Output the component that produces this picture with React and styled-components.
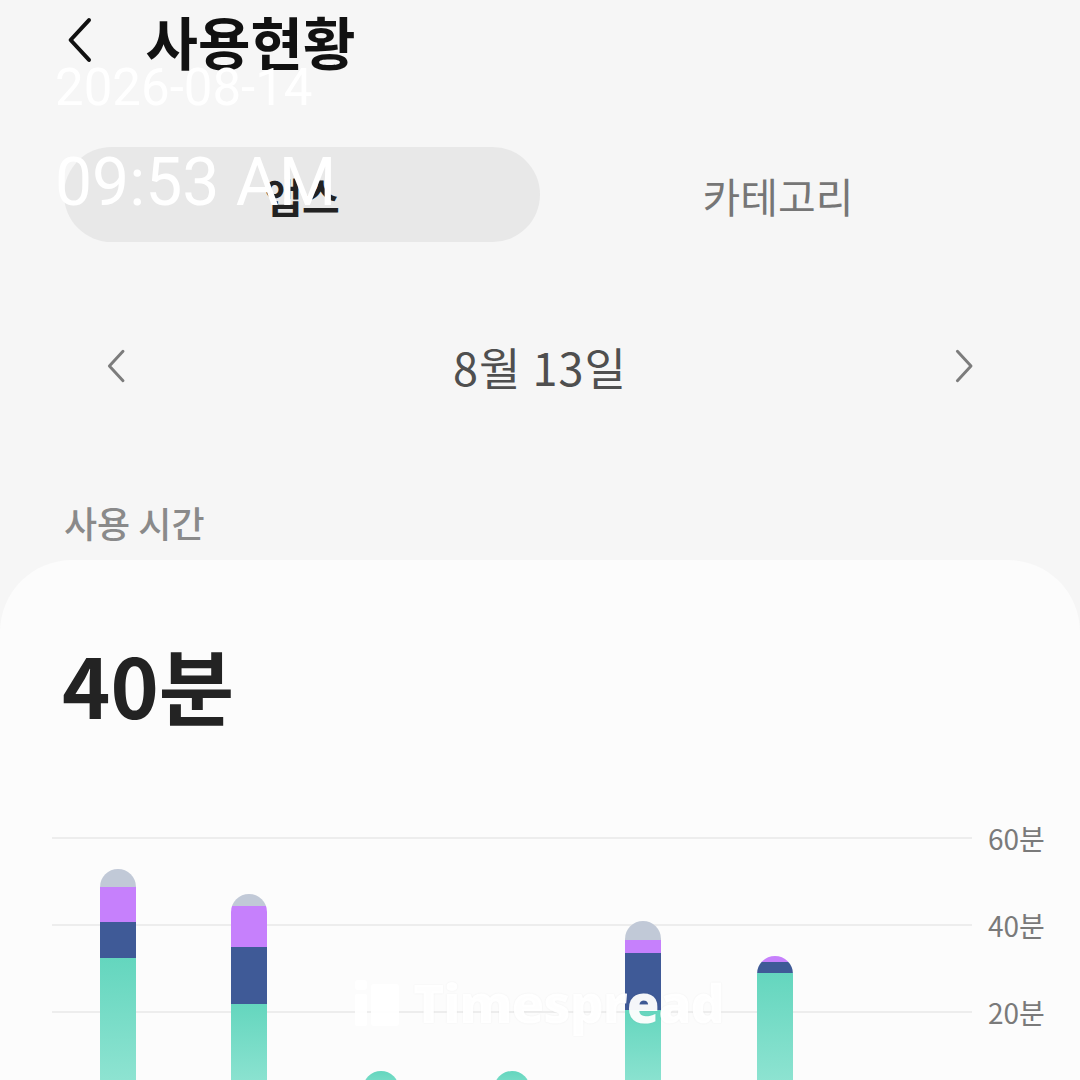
import React from "react";
import styled, { createGlobalStyle } from "styled-components";

const GlobalStyle = createGlobalStyle`
  html, body {
    margin: 0;
    padding: 0;
    background: #f6f6f6;
  }
  body {
    font-family: "Noto Sans CJK KR", "Noto Sans", sans-serif;
    overflow: hidden;
  }
`;

const PX_PER_MIN = 87 / 20;

const COLORS = {
  other: "#c1c9d7",
  purple: "#c680fc",
  navy: "#3f5a97",
  teal: "linear-gradient(180deg, #64d6be 0%, #94e5d4 100%)",
};

const bars = [
  [
    ["other", 4.1],
    ["purple", 8.1],
    ["navy", 8.3],
    ["teal", 32.4],
  ],
  [
    ["other", 2.8],
    ["purple", 9.4],
    ["navy", 13.1],
    ["teal", 21.8],
  ],
  [["teal", 6.4]],
  [["teal", 6.4]],
  [
    ["other", 4.4],
    ["purple", 3],
    ["navy", 13.1],
    ["teal", 20.4],
  ],
  [
    ["purple", 1.4],
    ["navy", 2.5],
    ["teal", 29],
  ],
  [],
];

const ticks = ["60분", "40분", "20분", ""];

const Page = styled.div`
  position: relative;
  width: 1080px;
  height: 1080px;
  overflow: hidden;
  background: #f6f6f6;
  display: flex;
  flex-direction: column;

  & > * {
    flex-shrink: 0;
  }
`;

const Header = styled.div`
  height: 80px;
  display: flex;
  align-items: center;
  padding-left: 66px;
  gap: 52px;
`;

const Title = styled.h1`
  margin: 0;
  font-size: 57px;
  font-weight: 700;
  color: #111;
  line-height: 1;
`;

const Segmented = styled.div`
  margin: 67px 64px 0;
  height: 95px;
  display: flex;
`;

const Segment = styled.div`
  flex: 1;
  display: flex;
  align-items: center;
  justify-content: center;
  border-radius: 48px;
  font-size: 41px;
  background: ${(p) => (p.$active ? "#e8e8e8" : "transparent")};
  color: ${(p) => (p.$active ? "#222" : "#767676")};
  font-weight: ${(p) => (p.$active ? 700 : 400)};
`;

const DateNav = styled.div`
  margin-top: 84px;
  height: 80px;
  padding: 0 106px 0 106px;
  display: flex;
  align-items: center;
  justify-content: space-between;
`;

const DateText = styled.div`
  font-size: 45px;
  color: #4f4f4f;
  font-weight: 400;
  letter-spacing: 1px;
`;

const SectionLabel = styled.div`
  margin: 94px 0 0 64px;
  height: 44px;
  line-height: 44px;
  font-size: 36px;
  font-weight: 500;
  color: #8a8a8a;
`;

const Card = styled.div`
  margin-top: 16px;
  flex: 1 0 auto;
  background: #fcfcfc;
  border-radius: 72px 72px 0 0;
  display: flex;
  flex-direction: column;
`;

const Total = styled.div`
  padding: 79px 0 0 62px;
  height: 90px;
  line-height: 90px;
  font-size: 82px;
  font-weight: 700;
  color: #232323;
`;

const Chart = styled.div`
  margin-top: 108px;
  padding-left: 52px;
  position: relative;
`;

const GridRow = styled.div`
  height: 87px;
  display: flex;
  align-items: flex-start;
`;

const GridLine = styled.div`
  width: 920px;
  border-top: 2px solid #ededed;
`;

const TickLabel = styled.div`
  margin-left: 16px;
  font-size: 28px;
  color: #7a7a7a;
  line-height: 34px;
  transform: translateY(-16px);
`;

const BarsLayer = styled.div`
  position: absolute;
  left: 52px;
  top: 1px;
  width: 920px;
  height: 261px;
  display: grid;
  grid-template-columns: repeat(7, 1fr);
  align-items: end;
  justify-items: center;
`;

const Bar = styled.div`
  width: 36px;
  display: flex;
  flex-direction: column;
  border-radius: 18px 18px 0 0;
  overflow: hidden;
`;

const Piece = styled.div`
  background: ${(p) => COLORS[p.$kind]};
`;

const Stamp = styled.div`
  position: absolute;
  left: 55px;
  top: 58px;
  font-family: Roboto, "Liberation Sans", sans-serif;
  color: #fff;
  display: flex;
  flex-direction: column;
  pointer-events: none;
`;

const StampDate = styled.div`
  font-size: 51px;
  line-height: 60px;
`;

const StampTime = styled.div`
  margin-top: 30px;
  font-size: 66px;
  line-height: 70px;
`;

const Watermark = styled.div`
  position: absolute;
  left: 355px;
  top: 977px;
  display: flex;
  align-items: center;
  gap: 14px;
  color: rgba(255, 255, 255, 0.95);
  pointer-events: none;
`;

const WatermarkText = styled.div`
  font-family: "Open Sans", Lato, sans-serif;
  font-weight: 800;
  font-size: 53px;
  line-height: 52px;
  letter-spacing: -1px;
  text-shadow: 0 0 2px rgba(0, 0, 0, 0.06);
`;

const Chevron = ({ dir = "left", size = 40, color = "#111", width = 3 }) => (
  <svg width={size * 0.6} height={size} viewBox="0 0 18 30" fill="none">
    <path
      d={dir === "left" ? "M15 2 L3 15 L15 28" : "M3 2 L15 15 L3 28"}
      stroke={color}
      strokeWidth={width}
      strokeLinecap="round"
      strokeLinejoin="round"
    />
  </svg>
);

const WatermarkIcon = () => (
  <svg width="44" height="46" viewBox="0 0 44 46" fill="rgba(255,255,255,0.95)">
    <rect x="0" y="0" width="12" height="10" rx="3" />
    <rect x="0" y="14" width="12" height="32" rx="2" />
    <rect x="16" y="4" width="28" height="42" rx="3" />
  </svg>
);

const App = () => {
  return (
    <>
      <GlobalStyle />
      <Page>
        <Header>
          <Chevron dir="left" size={46} color="#111" width={2.6} />
          <Title>사용현황</Title>
        </Header>

        <Segmented>
          <Segment $active>앱스</Segment>
          <Segment>카테고리</Segment>
        </Segmented>

        <DateNav>
          <Chevron dir="left" size={34} color="#7c7c7c" width={2.6} />
          <DateText>8월 13일</DateText>
          <Chevron dir="right" size={34} color="#7c7c7c" width={2.6} />
        </DateNav>

        <SectionLabel>사용 시간</SectionLabel>

        <Card>
          <Total>40분</Total>
          <Chart>
            {ticks.map((t, i) => (
              <GridRow key={i}>
                <GridLine />
                <TickLabel>{t}</TickLabel>
              </GridRow>
            ))}
            <BarsLayer>
              {bars.map((segs, i) => (
                <Bar key={i}>
                  {segs.map(([kind, min], j) => (
                    <Piece
                      key={j}
                      $kind={kind}
                      style={{ height: Math.round(min * PX_PER_MIN) }}
                    />
                  ))}
                </Bar>
              ))}
            </BarsLayer>
          </Chart>
        </Card>

        <Stamp>
          <StampDate>2026-08-14</StampDate>
          <StampTime>09:53 AM</StampTime>
        </Stamp>

        <Watermark>
          <WatermarkIcon />
          <WatermarkText>Timespread</WatermarkText>
        </Watermark>
      </Page>
    </>
  );
};

export default App;
